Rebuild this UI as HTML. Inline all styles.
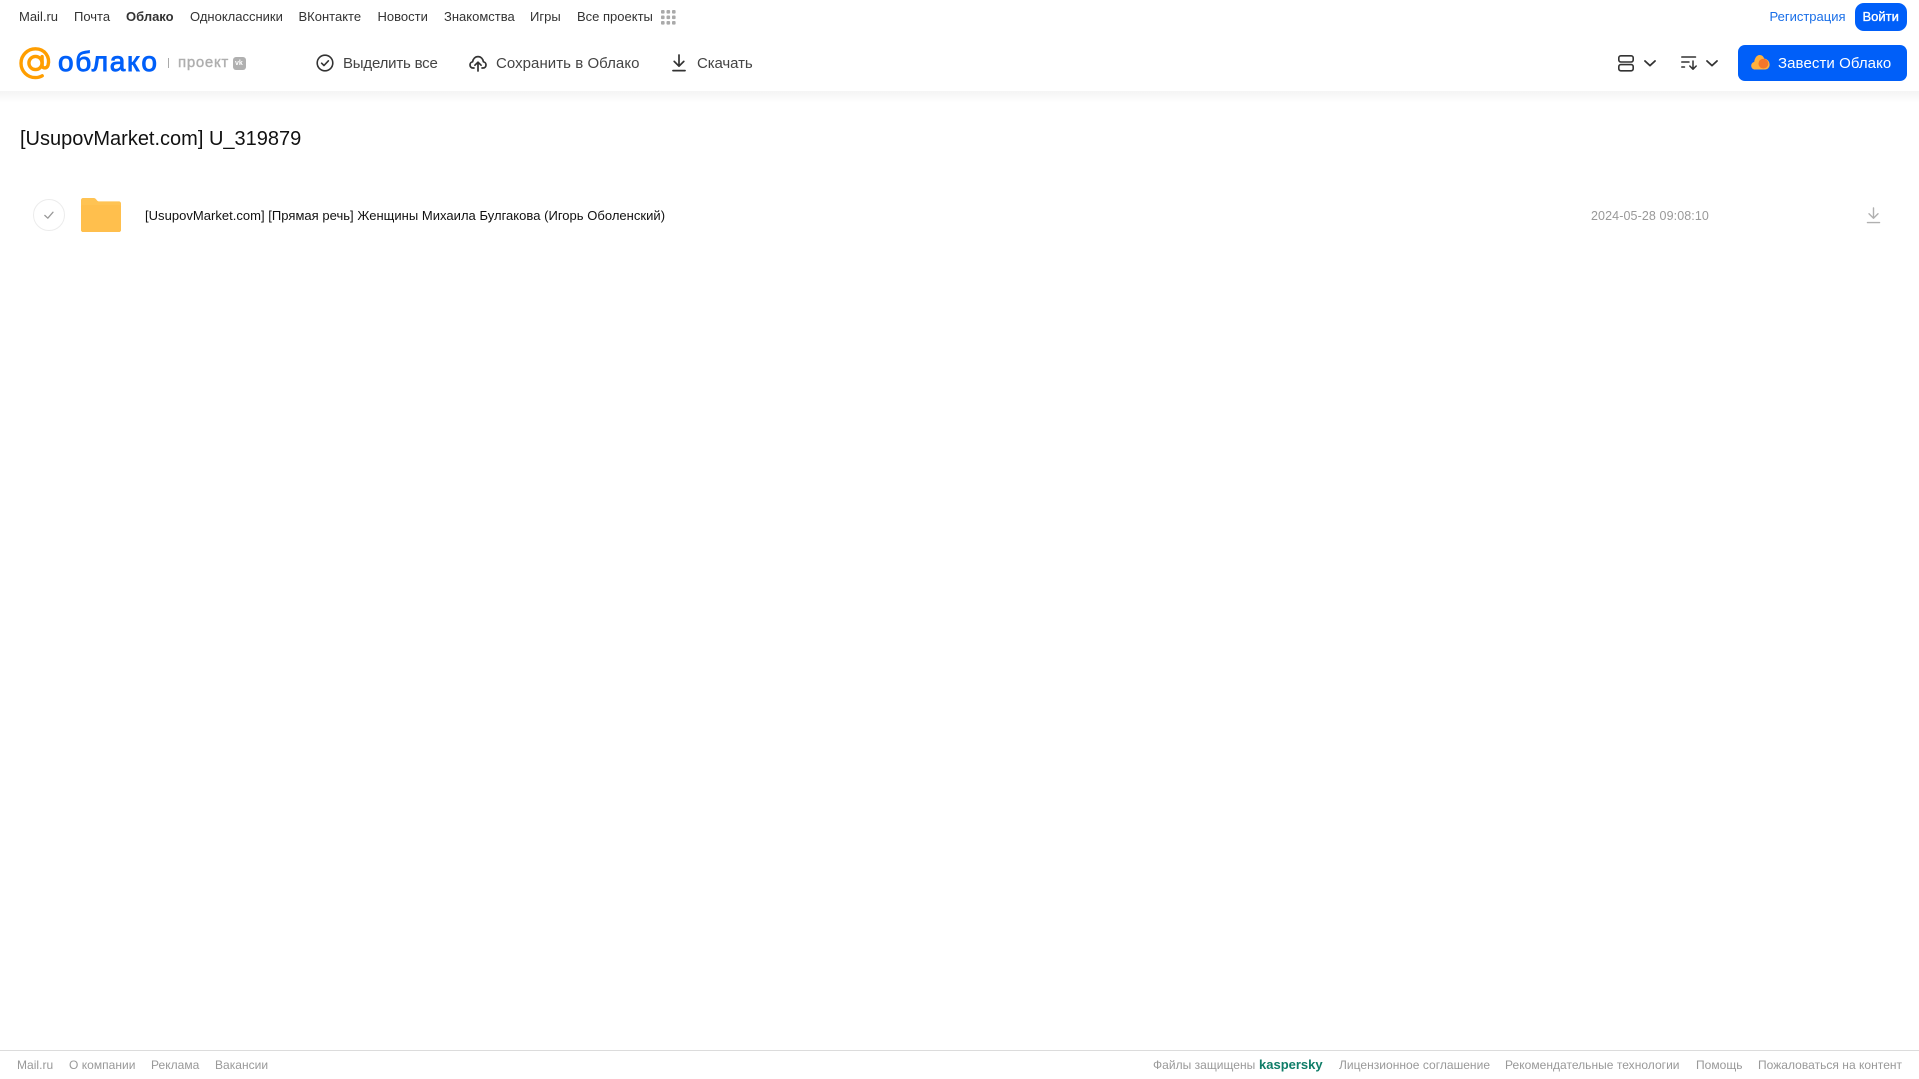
<!DOCTYPE html>
<html lang="ru">
<head>
<meta charset="utf-8">
<title>Облако</title>
<style>
html,body{margin:0;padding:0;background:#fff;}
body{width:1919px;height:1079px;position:relative;overflow:hidden;font-family:"Liberation Sans",sans-serif;}
.t{position:absolute;white-space:nowrap;line-height:20px;}
.n{font-size:13px;color:#333;top:7px;}
.b{font-size:15px;color:#444;top:54px;}
.f{font-size:12px;color:#999;top:1055px;letter-spacing:.03px;}
svg{position:absolute;overflow:visible;}
#shadow{position:absolute;left:0;top:91px;width:1919px;height:12px;background:linear-gradient(#f4f4f4,#fff);}
#fl{position:absolute;left:0;top:1050px;width:1919px;height:1px;background:#dcdcdc;}
.btn{position:absolute;background:#005ff9;}
</style>
</head>
<body>
<div id="shadow"></div>

<span class="t n" style="left:19px">Mail.ru</span>
<span class="t n" style="left:74px">Почта</span>
<span class="t n" style="left:126px;font-weight:bold">Облако</span>
<span class="t n" style="left:190px">Одноклассники</span>
<span class="t n" style="left:298.5px">ВКонтакте</span>
<span class="t n" style="left:377.5px">Новости</span>
<span class="t n" style="left:444px">Знакомства</span>
<span class="t n" style="left:530px">Игры</span>
<span class="t n" style="left:577px">Все проекты</span>
<svg style="left:661px;top:10px" width="15" height="15" fill="#aaa">
<rect x="0" y="0" width="3.6" height="3.6" rx="1"/><rect x="5.5" y="0" width="3.6" height="3.6" rx="1"/><rect x="11" y="0" width="3.6" height="3.6" rx="1"/>
<rect x="0" y="5.5" width="3.6" height="3.6" rx="1"/><rect x="5.5" y="5.5" width="3.6" height="3.6" rx="1"/><rect x="11" y="5.5" width="3.6" height="3.6" rx="1"/>
<rect x="0" y="11" width="3.6" height="3.6" rx="1"/><rect x="5.5" y="11" width="3.6" height="3.6" rx="1"/><rect x="11" y="11" width="3.6" height="3.6" rx="1"/>
</svg>

<span class="t n" style="left:1769.5px;color:#1a6fe8">Регистрация</span>
<div class="btn" style="left:1855px;top:3px;width:52px;height:28px;border-radius:9px"></div>
<span class="t n" style="left:1862.5px;color:#fff;-webkit-text-stroke:.35px #fff">Войти</span>

<!-- logo -->
<svg style="left:19px;top:47px" width="33" height="33" viewBox="0 0 33 33" fill="none">
<circle cx="16.5" cy="16" r="6.6" stroke="#ff9e00" stroke-width="3.4"/>
<path d="M23.1 9.6V18.4C23.1 21.8 28 21.8 29 18.4C31.4 9.8 25.6 1.8 16.5 1.8C8.6 1.8 2 8.2 2 16.2C2 24.2 8.4 30.6 16.4 30.6C19 30.6 21.2 30 23.2 28.8" stroke="#ff9e00" stroke-width="3.4" stroke-linecap="round"/>
</svg>
<span class="t" style="left:58px;top:46px;font-size:28px;line-height:32px;color:#005ff9;-webkit-text-stroke:.9px #005ff9;letter-spacing:1.7px">облако</span>
<div style="position:absolute;left:168px;top:58px;width:1px;height:10px;background:#aaa"></div>
<span class="t" style="left:178px;top:53px;font-size:15px;color:#aeaeae;-webkit-text-stroke:.4px #aeaeae;letter-spacing:.7px">проект</span>
<div style="position:absolute;left:233px;top:57px;width:13px;height:13px;border-radius:3px;background:#b0b0b0"></div>
<span class="t" style="left:235px;top:58px;font-size:7px;line-height:11px;font-weight:bold;color:#fff">vk</span>

<!-- toolbar -->
<svg style="left:316px;top:54px" width="18" height="18" viewBox="0 0 18 18" fill="none" stroke="#333" stroke-width="1.6" stroke-linecap="round" stroke-linejoin="round">
<circle cx="9" cy="9" r="7.8"/><path d="M5.6 9.2L8 11.5L12.4 6.8"/>
</svg>
<span class="t b" style="left:343px;letter-spacing:-.2px">Выделить все</span>

<svg style="left:469px;top:54px" width="18" height="18" viewBox="0 0 18 18" fill="none" stroke="#333" stroke-width="1.7" stroke-linecap="round" stroke-linejoin="round">
<path d="M5 14H4C2 14 1 12.4 1 10.9C1 9.4 2 8 3.6 7.8C4 4.8 6.2 2.6 9 2.6C11.8 2.6 14 4.8 14.4 7.8C16 8 17 9.4 17 10.9C17 12.4 16 14 14 14H13"/>
<path d="M9 17V8.4M5.9 11.2L9 8.2L12.1 11.2"/>
</svg>
<span class="t b" style="left:496px;letter-spacing:.05px">Сохранить в Облако</span>

<svg style="left:672px;top:54px" width="14" height="18" viewBox="0 0 14 18" fill="none" stroke="#333" stroke-width="1.7" stroke-linecap="round" stroke-linejoin="round">
<path d="M7 1V12M2.2 7.4L7 12.2L11.8 7.4"/><path d="M1 16.6H13"/>
</svg>
<span class="t b" style="left:697px;letter-spacing:-.1px">Скачать</span>

<!-- right tools -->
<svg style="left:1618px;top:55px" width="16" height="17" viewBox="0 0 16 17" fill="none" stroke="#333" stroke-width="1.6">
<rect x=".8" y=".8" width="14.4" height="6.2" rx="2"/><rect x=".8" y="9.6" width="14.4" height="6.2" rx="2"/>
</svg>
<svg style="left:1644px;top:60px" width="12" height="7" viewBox="0 0 12 7" fill="none" stroke="#333" stroke-width="1.8" stroke-linecap="round" stroke-linejoin="round"><path d="M1 1L6 5.6L11 1"/></svg>
<svg style="left:1681px;top:56px" width="16" height="14" viewBox="0 0 16 14" fill="none" stroke="#333" stroke-width="1.5" stroke-linecap="round" stroke-linejoin="round">
<path d="M.8 1H14.5M.8 6H8M.8 11H3.5"/><path d="M12 5V13M8.8 10L12 13.2L15.2 10"/>
</svg>
<svg style="left:1706px;top:60px" width="12" height="7" viewBox="0 0 12 7" fill="none" stroke="#333" stroke-width="1.8" stroke-linecap="round" stroke-linejoin="round"><path d="M1 1L6 5.6L11 1"/></svg>

<div class="btn" style="left:1738px;top:45px;width:169px;height:36px;border-radius:7px"></div>
<svg style="left:1751px;top:54px" width="19" height="16" viewBox="0 0 19 16">
<path d="M4 15.5C1.8 15.5 .2 13.8 .2 11.7C.2 9.8 1.6 8.3 3.2 8C3.6 4.4 5.6 1 8.6 1C11 1 12.6 2.6 13.2 4.6C16 4.8 18.6 7.2 18.6 10.6C18.6 13.4 16.6 15.5 14 15.5Z" fill="#ffb13d"/>
<circle cx="12.4" cy="9.6" r="4.9" fill="#f4762a"/>
</svg>
<span class="t b" style="left:1778px;color:#fff;letter-spacing:.08px">Завести Облако</span>

<!-- content -->
<span class="t" style="left:20px;top:126px;font-size:20px;line-height:26px;color:#111">[UsupovMarket.com] U_319879</span>

<svg style="left:33px;top:199px" width="32" height="32" viewBox="0 0 32 32" fill="none">
<circle cx="16" cy="16" r="15.5" stroke="#ececec"/>
<path d="M11.8 16.4L14.8 19.2L20 13.2" stroke="#999" stroke-width="1.3" stroke-linecap="round" stroke-linejoin="round"/>
</svg>
<svg style="left:81px;top:198px" width="40" height="34" viewBox="0 0 40 34">
<path d="M2 0H12.5C14.5 0 15 1.2 16 2.4C16.6 3.1 17.2 3.4 18.2 3.4H38C39.1 3.4 40 4.3 40 5.4V32C40 33.1 39.1 34 38 34H2C.9 34 0 33.1 0 32V2C0 .9.9 0 2 0Z" fill="#ffc353"/>
<path d="M0 8.6C0 7.5.9 7 2 7H38C39.1 7 40 7.5 40 8.6V32C40 33.1 39.1 34 38 34H2C.9 34 0 33.1 0 32Z" fill="#ffbf4d"/>
</svg>
<span class="t" style="left:145px;top:206px;font-size:13px;color:#111;letter-spacing:.025px">[UsupovMarket.com] [Прямая речь] Женщины Михаила Булгакова (Игорь Оболенский)</span>
<span class="t" style="left:1591px;top:206px;font-size:12.5px;color:#999;letter-spacing:.1px">2024-05-28 09:08:10</span>
<svg style="left:1867px;top:207px" width="13" height="17" viewBox="0 0 13 17" fill="none" stroke="#b0b0b0" stroke-width="1.4" stroke-linecap="round" stroke-linejoin="round">
<path d="M6.5 1V11M2 6.8L6.5 11.2L11 6.8"/><path d="M.5 15.6H12.5"/>
</svg>

<!-- footer -->
<div id="fl"></div>
<span class="t f" style="left:17px">Mail.ru</span>
<span class="t f" style="left:69px">О компании</span>
<span class="t f" style="left:151px">Реклама</span>
<span class="t f" style="left:215px">Вакансии</span>
<span class="t f" style="left:1153px">Файлы защищены</span>
<span class="t f" style="left:1259px;color:#0f7d68;font-weight:bold;font-size:13px;letter-spacing:0">kaspersky</span>
<span class="t f" style="left:1339px">Лицензионное соглашение</span>
<span class="t f" style="left:1505px">Рекомендательные технологии</span>
<span class="t f" style="left:1696px">Помощь</span>
<span class="t f" style="left:1758px">Пожаловаться на контент</span>
</body>
</html>
